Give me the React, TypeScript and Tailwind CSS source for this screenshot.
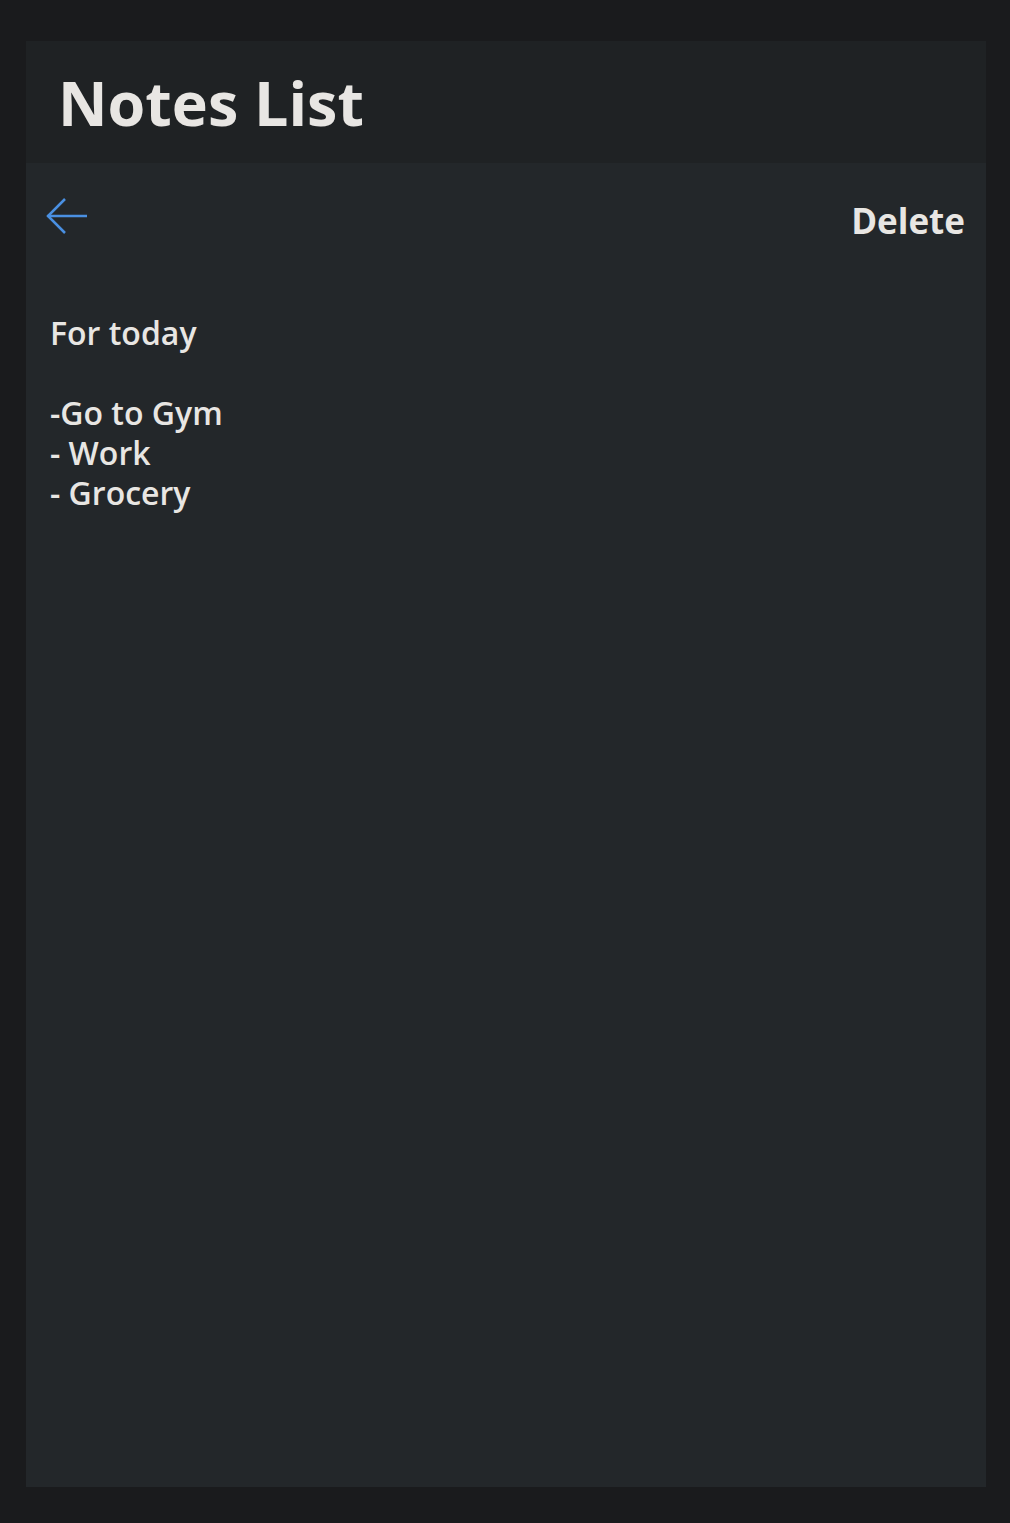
export default function App() {
  return (
    <div
      className="min-h-[1523px] bg-[#1a1b1d] pl-[26px] pr-[24px] pt-[41px] pb-[36px] flex flex-col"
      style={{ fontFamily: "'Open Sans', 'Noto Sans', sans-serif" }}
    >
      <div className="flex-1 flex flex-col bg-[#23272a]">
        {/* Header */}
        <header className="h-[122px] bg-[#1f2224] flex items-center px-[32px]">
          <h1 className="text-[61px] font-bold text-[#e8e6e3] leading-none">
            Notes List
          </h1>
        </header>

        {/* Toolbar */}
        <div className="flex items-start justify-between pl-[20px] pr-[21px] pt-[35px]">
          <button className="text-[#4a90e2]">
            <svg width="42" height="36" viewBox="0 0 42 36" fill="none" stroke="currentColor" strokeWidth="2.5">
              <path d="M1.5 18H41" />
              <path d="M19 1L2 18L19 35" />
            </svg>
          </button>
          <button className="text-[35px] font-bold text-[#e8e6e3] leading-none mt-[5px]">
            Delete
          </button>
        </div>

        {/* Note body */}
        <div className="px-[24px] pt-[75px] text-[32px] font-semibold leading-[40px] text-[#e8e6e3] whitespace-pre-line">
          {"For today\n\n-Go to Gym\n- Work\n- Grocery"}
        </div>
      </div>
    </div>
  );
}
